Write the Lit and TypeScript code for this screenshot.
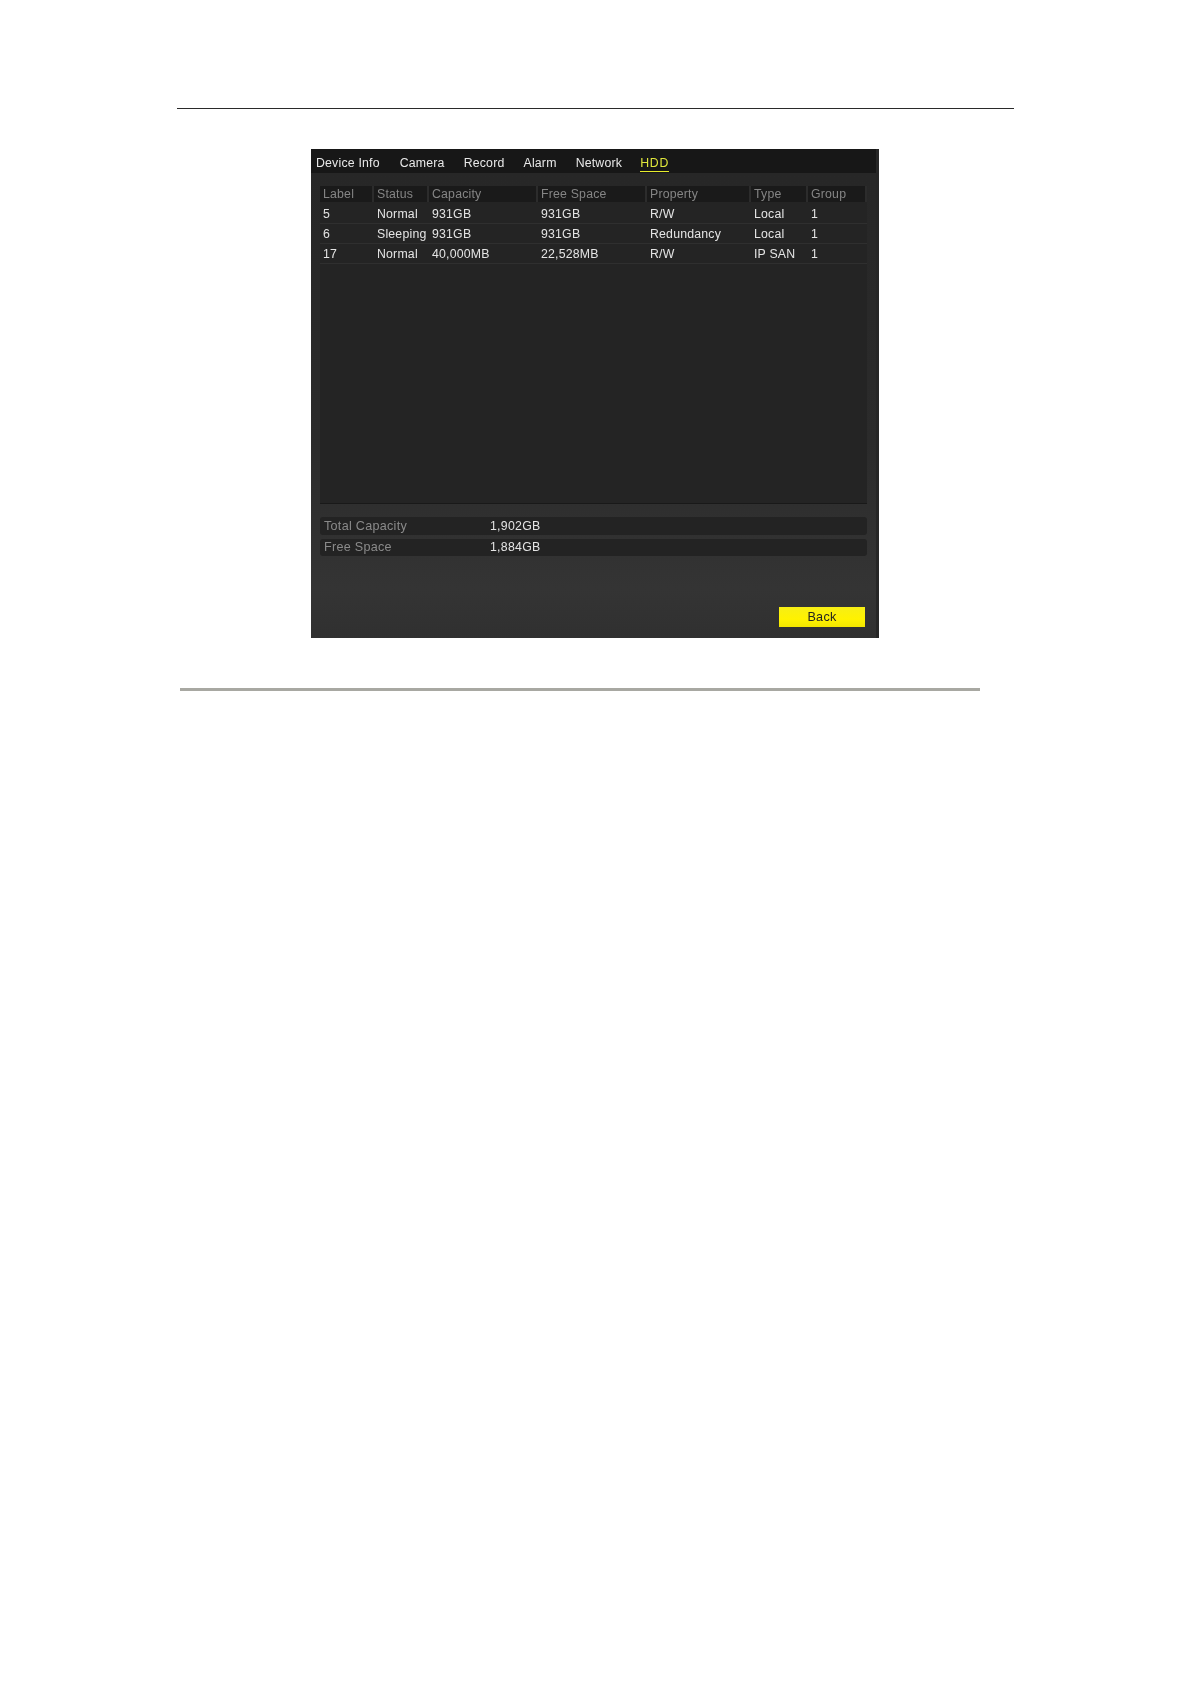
import { LitElement, html, css } from "lit";
import { customElement } from "lit/decorators.js";

const COLS = ["Label", "Status", "Capacity", "Free Space", "Property", "Type", "Group"];
const ROWS = [
  ["5", "Normal", "931GB", "931GB", "R/W", "Local", "1"],
  ["6", "Sleeping", "931GB", "931GB", "Redundancy", "Local", "1"],
  ["17", "Normal", "40,000MB", "22,528MB", "R/W", "IP SAN", "1"],
];
const TABS = ["Device Info", "Camera", "Record", "Alarm", "Network"];

@customElement("app-root")
export class AppRoot extends LitElement {
  static styles = css`
    :host { display: block; width: 1191px; height: 1684px; background: #fff; overflow: hidden; font-family: "Liberation Sans", Arial, sans-serif; }
    .page { padding: 108px 177px 0 177px; display: flex; flex-direction: column; }
    .rule-top { height: 1px; background: #2a2a2a; width: 837px; }
    .shot { margin: 40px 0 0 134px; width: 568px; height: 489px; box-sizing: border-box; background: linear-gradient(#272727 5%, #2b2b2b 60%, #343434 90%, #303030); display: flex; flex-direction: column; position: relative; border-right: 3px solid #262626; font-size: 12.6px; letter-spacing: 0.28px; filter: blur(0.45px); }
    .tabs { height: 24px; box-sizing: border-box; background: #171717; display: flex; align-items: baseline; padding: 7px 0 0 5px; color: #e8e8e8; flex: none; font-size: 12.3px; letter-spacing: 0.2px; }
    .tab { margin-right: 19px; white-space: nowrap; line-height: 15px; }
    .tab.d { margin-right: 20px; }
    .tab.net { margin-right: 18px; }
    .tab.on { color: #dfe63c; border-bottom: 1px solid #e6ec2c; margin: 0; letter-spacing: 0.8px; }
    .panel { margin: 13px 0 0 9px; width: 547px; height: 318px; background: #242424; flex: none; border-bottom: 1px solid #191919; box-sizing: border-box; font-size: 12.3px; letter-spacing: 0.2px; }
    .grid, .row { display: grid; grid-template-columns: 54px 55px 109px 109px 104px 57px 59px; align-items: center; }
    .grid { height: 16px; background: #1a1a1a; color: #858585; margin-bottom: 2px; }
    .grid span { padding-left: 3px; height: 100%; line-height: 16px; border-right: 2px solid #2c2c2c; }
    .row { height: 20px; color: #e4e4e4; border-bottom: 1px solid #2f2f2f; box-sizing: border-box; }
    .row span { padding-left: 3px; white-space: nowrap; }
    .sum { margin: 13px 0 0 9px; width: 547px; flex: none; display: flex; flex-direction: column; gap: 4px; }
    .srow { height: 17.5px; background: #232323; border-radius: 3px; display: flex; align-items: center; color: #8a8a8a; padding-left: 4px; }
    .srow .k { width: 166px; }
    .srow .v { color: #e4e4e4; font-size: 12.3px; }
    .btn { position: absolute; left: 468px; top: 458px; width: 86px; height: 20px; background: linear-gradient(#f6ee16, #fff200 60%, #f2e600); color: #222; display: flex; align-items: center; justify-content: center; font-size: 12.6px; }
    .rule-bot { margin: 50px 0 0 3px; height: 3px; width: 800px; background: #a8a8a2; }
  `;

  render() {
    return html`<div class="page">
      <div class="rule-top"></div>
      <div class="shot">
        <div class="tabs">
          ${TABS.map((t, i) => html`<span class="tab ${i === 0 ? "d" : i === 4 ? "net" : ""}">${t}</span>`)}
          <span class="tab on">HDD</span>
        </div>
        <div class="panel">
          <div class="grid">${COLS.map((c) => html`<span>${c}</span>`)}</div>
          ${ROWS.map((r) => html`<div class="row">${r.map((c) => html`<span>${c}</span>`)}</div>`)}
        </div>
        <div class="sum">
          <div class="srow"><span class="k">Total Capacity</span><span class="v">1,902GB</span></div>
          <div class="srow"><span class="k">Free Space</span><span class="v">1,884GB</span></div>
        </div>
        <div class="btn">Back</div>
      </div>
      <div class="rule-bot"></div>
    </div>`;
  }
}
